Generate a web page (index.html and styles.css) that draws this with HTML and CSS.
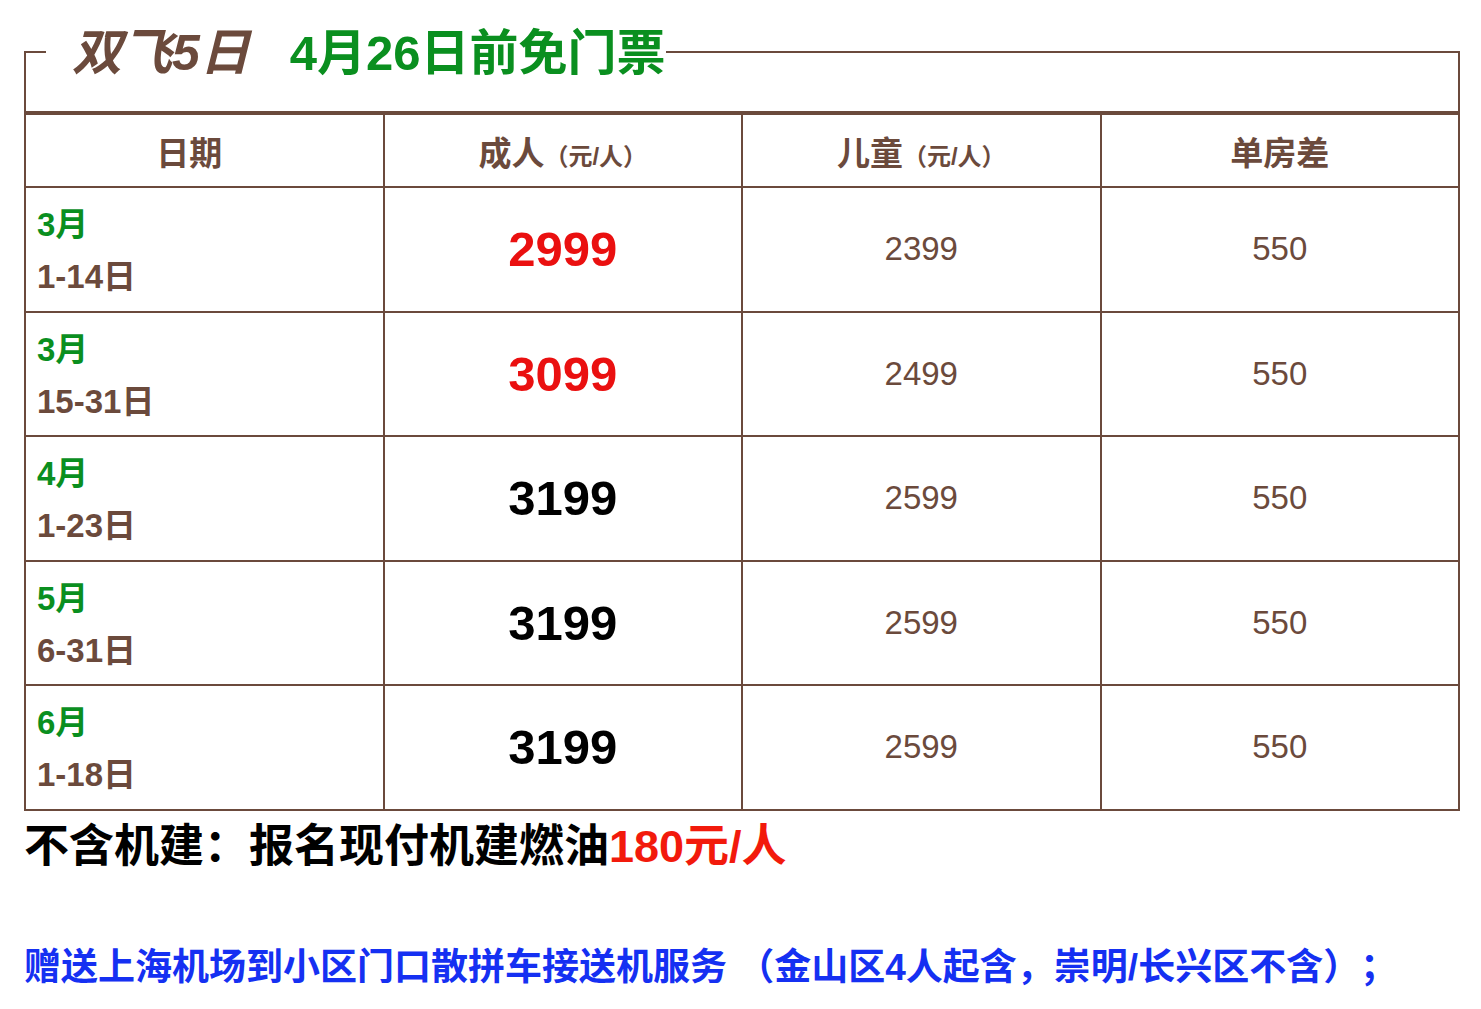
FILE: index.html
```html
<!DOCTYPE html>
<html lang="zh-CN">
<head>
<meta charset="utf-8">
<title>双飞5日</title>
<link rel="stylesheet" href="styles.css">
</head>
<body>
<div class="wrap">
  <fieldset class="box">
    <legend class="title"><span class="title-a">双飞5日</span><span class="title-b">4月26日前免门票</span></legend>
    <div class="box-body"></div>
  </fieldset>
  <table class="price">
    <colgroup><col><col><col><col></colgroup>
    <thead>
      <tr>
        <th class="th-date">日期</th>
        <th>成人<small>（元/人）</small></th>
        <th>儿童<small>（元/人）</small></th>
        <th>单房差</th>
      </tr>
    </thead>
    <tbody>
      <tr>
        <td class="date"><span class="month">3月</span><br>1-14日</td>
        <td class="adult red">2999</td>
        <td class="num">2399</td>
        <td class="num">550</td>
      </tr>
      <tr>
        <td class="date"><span class="month">3月</span><br>15-31日</td>
        <td class="adult red">3099</td>
        <td class="num">2499</td>
        <td class="num">550</td>
      </tr>
      <tr>
        <td class="date"><span class="month">4月</span><br>1-23日</td>
        <td class="adult">3199</td>
        <td class="num">2599</td>
        <td class="num">550</td>
      </tr>
      <tr>
        <td class="date"><span class="month">5月</span><br>6-31日</td>
        <td class="adult">3199</td>
        <td class="num">2599</td>
        <td class="num">550</td>
      </tr>
      <tr>
        <td class="date"><span class="month">6月</span><br>1-18日</td>
        <td class="adult">3199</td>
        <td class="num">2599</td>
        <td class="num">550</td>
      </tr>
    </tbody>
  </table>
  <p class="note">不含机建：报名现付机建燃油<span class="note-red">180元/人</span></p>
  <p class="gift">赠送上海机场到小区门口散拼车接送机服务 （金山区4人起含，崇明/长兴区不含）；</p>
</div>
</body>
</html>
```

FILE: styles.css
```css
html, body {
  margin: 0;
  padding: 0;
  background: #ffffff;
}

body {
  font-family: "Liberation Sans", "Noto Sans CJK SC", sans-serif;
  color: #6b4a3c;
  text-spacing-trim: space-all;
}

.wrap {
  width: 1436px;
  padding: 22px 0 0 24px;
}

.box {
  margin: 0;
  padding: 0 0 0 20px;
  border: 2px solid #6b4a3c;
  min-width: 0;
}

.title {
  padding: 2px 0 0 26px;
  margin: 0;
  font-size: 49px;
  line-height: 58px;
  font-weight: bold;
  white-space: nowrap;
}

.title-a {
  font-style: italic;
  font-size: 50px;
  color: #6b4a3c;
  margin-right: 40px;
}

.title-b {
  color: #0a8f1f;
}

.box-body {
  height: 29px;
}

.price {
  width: 1436px;
  table-layout: fixed;
  border-collapse: separate;
  border-spacing: 0;
  border-top: 2px solid #6b4a3c;
  border-left: 2px solid #6b4a3c;
}

.price th,
.price td {
  box-sizing: border-box;
  border-right: 2px solid #6b4a3c;
  border-bottom: 2px solid #6b4a3c;
  padding: 0;
  text-align: center;
  vertical-align: middle;
}

.price th {
  height: 73px;
  font-size: 33px;
  font-weight: bold;
  color: #6b4a3c;
}

.price th.th-date {
  padding-right: 30px;
}

.price th small {
  font-size: 24px;
  font-weight: bold;
}

.price td {
  height: 124.5px;
}

.price td.date {
  text-align: left;
  padding: 4px 0 0 11px;
  font-size: 33px;
  font-weight: bold;
  line-height: 52px;
  color: #6b4a3c;
}

.month {
  color: #0a8f1f;
}

.price td.adult {
  font-size: 49px;
  font-weight: bold;
  color: #000000;
}

.price td.adult.red {
  color: #ea1010;
}

.price td.num {
  font-size: 33px;
  color: #6b4a3c;
}

.note {
  margin: 0;
  font-size: 45px;
  line-height: 72px;
  font-weight: bold;
  color: #000000;
  white-space: nowrap;
}

.note-red {
  color: #f21a0c;
}

.gift {
  margin: 60px 0 0 0;
  font-size: 37px;
  line-height: 50px;
  font-weight: bold;
  color: #1530f2;
  white-space: nowrap;
}
```
